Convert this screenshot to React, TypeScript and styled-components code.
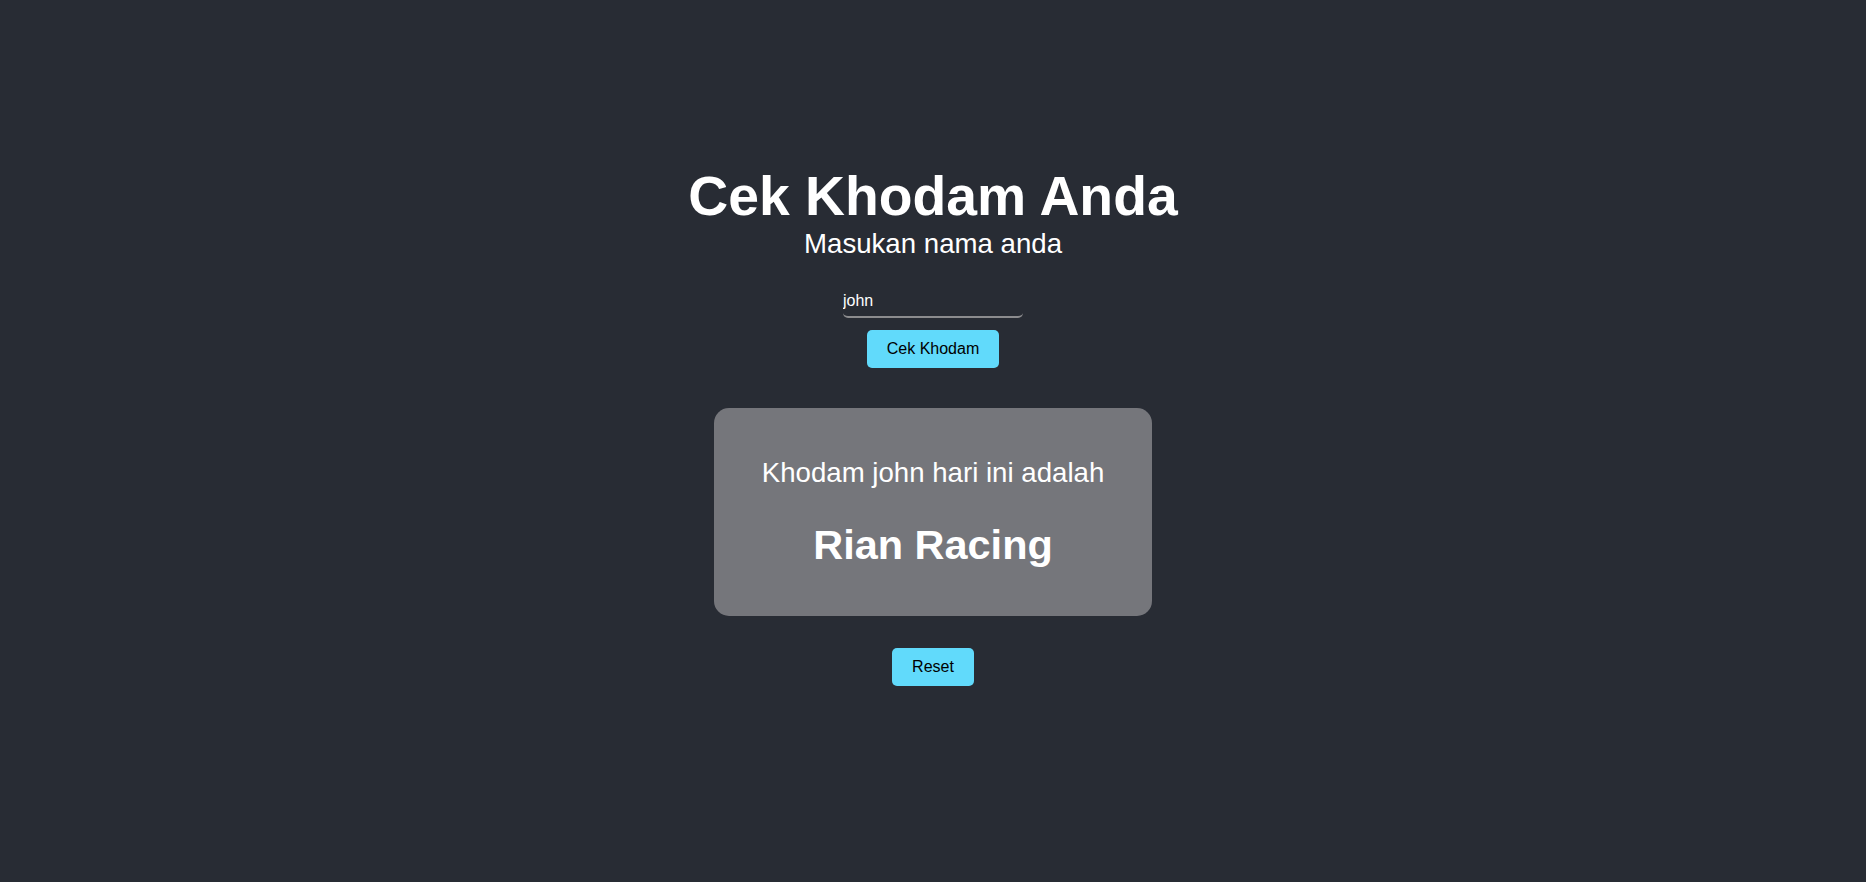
import React, { useState } from "react";
import styled, { createGlobalStyle } from "styled-components";

const GlobalStyle = createGlobalStyle`
  html, body {
    margin: 0;
    padding: 0;
    background: #282c34;
  }
  * { box-sizing: border-box; }
`;

const Page = styled.div`
  min-height: 100vh;
  background: #282c34;
  color: #ffffff;
  font-family: "Liberation Sans", Arial, sans-serif;
  display: flex;
  flex-direction: column;
  align-items: center;
  padding-top: 164px;
`;

const Title = styled.h1`
  margin: 0;
  font-size: 55.28px;
  font-weight: 700;
  line-height: normal;
`;

const Subtitle = styled.p`
  margin: 0;
  font-size: 27.64px;
  line-height: normal;
`;

const NameInput = styled.input`
  margin-top: 26px;
  width: 180px;
  padding: 6px 0;
  font-family: "Liberation Sans", Arial, sans-serif;
  font-size: 16px;
  line-height: normal;
  color: #ffffff;
  background: transparent;
  border: none;
  border-bottom: 2px solid #8c8c8e;
  border-radius: 5px;
  outline: none;
`;

const ActionButton = styled.button<{ $top: number }>`
  margin-top: ${(p) => p.$top}px;
  padding: 10px 20px;
  font-family: "Liberation Sans", Arial, sans-serif;
  font-size: 16px;
  line-height: normal;
  color: #000000;
  background: #61dafb;
  border: none;
  border-radius: 5px;
  cursor: pointer;
`;

const ResultCard = styled.div`
  margin-top: 40px;
  width: 438px;
  padding: 49px 0 47px;
  background: #75767b;
  border-radius: 15px;
  display: flex;
  flex-direction: column;
  align-items: center;
  gap: 31.6px;
`;

const ResultLine = styled.p`
  margin: 0;
  font-size: 27.64px;
  line-height: normal;
`;

const KhodamName = styled.h2`
  margin: 0;
  font-size: 41.46px;
  font-weight: 700;
  line-height: normal;
`;

export default function App() {
  const [name, setName] = useState("john");
  const [shown, setShown] = useState(true);

  return (
    <>
      <GlobalStyle />
      <Page>
        <Title>Cek Khodam Anda</Title>
        <Subtitle>Masukan nama anda</Subtitle>
        <NameInput value={name} onChange={(e) => setName(e.target.value)} />
        <ActionButton $top={12} onClick={() => setShown(true)}>
          Cek Khodam
        </ActionButton>
        {shown && (
          <>
            <ResultCard>
              <ResultLine>Khodam {name} hari ini adalah</ResultLine>
              <KhodamName>Rian Racing</KhodamName>
            </ResultCard>
            <ActionButton $top={32} onClick={() => setShown(false)}>
              Reset
            </ActionButton>
          </>
        )}
      </Page>
    </>
  );
}
